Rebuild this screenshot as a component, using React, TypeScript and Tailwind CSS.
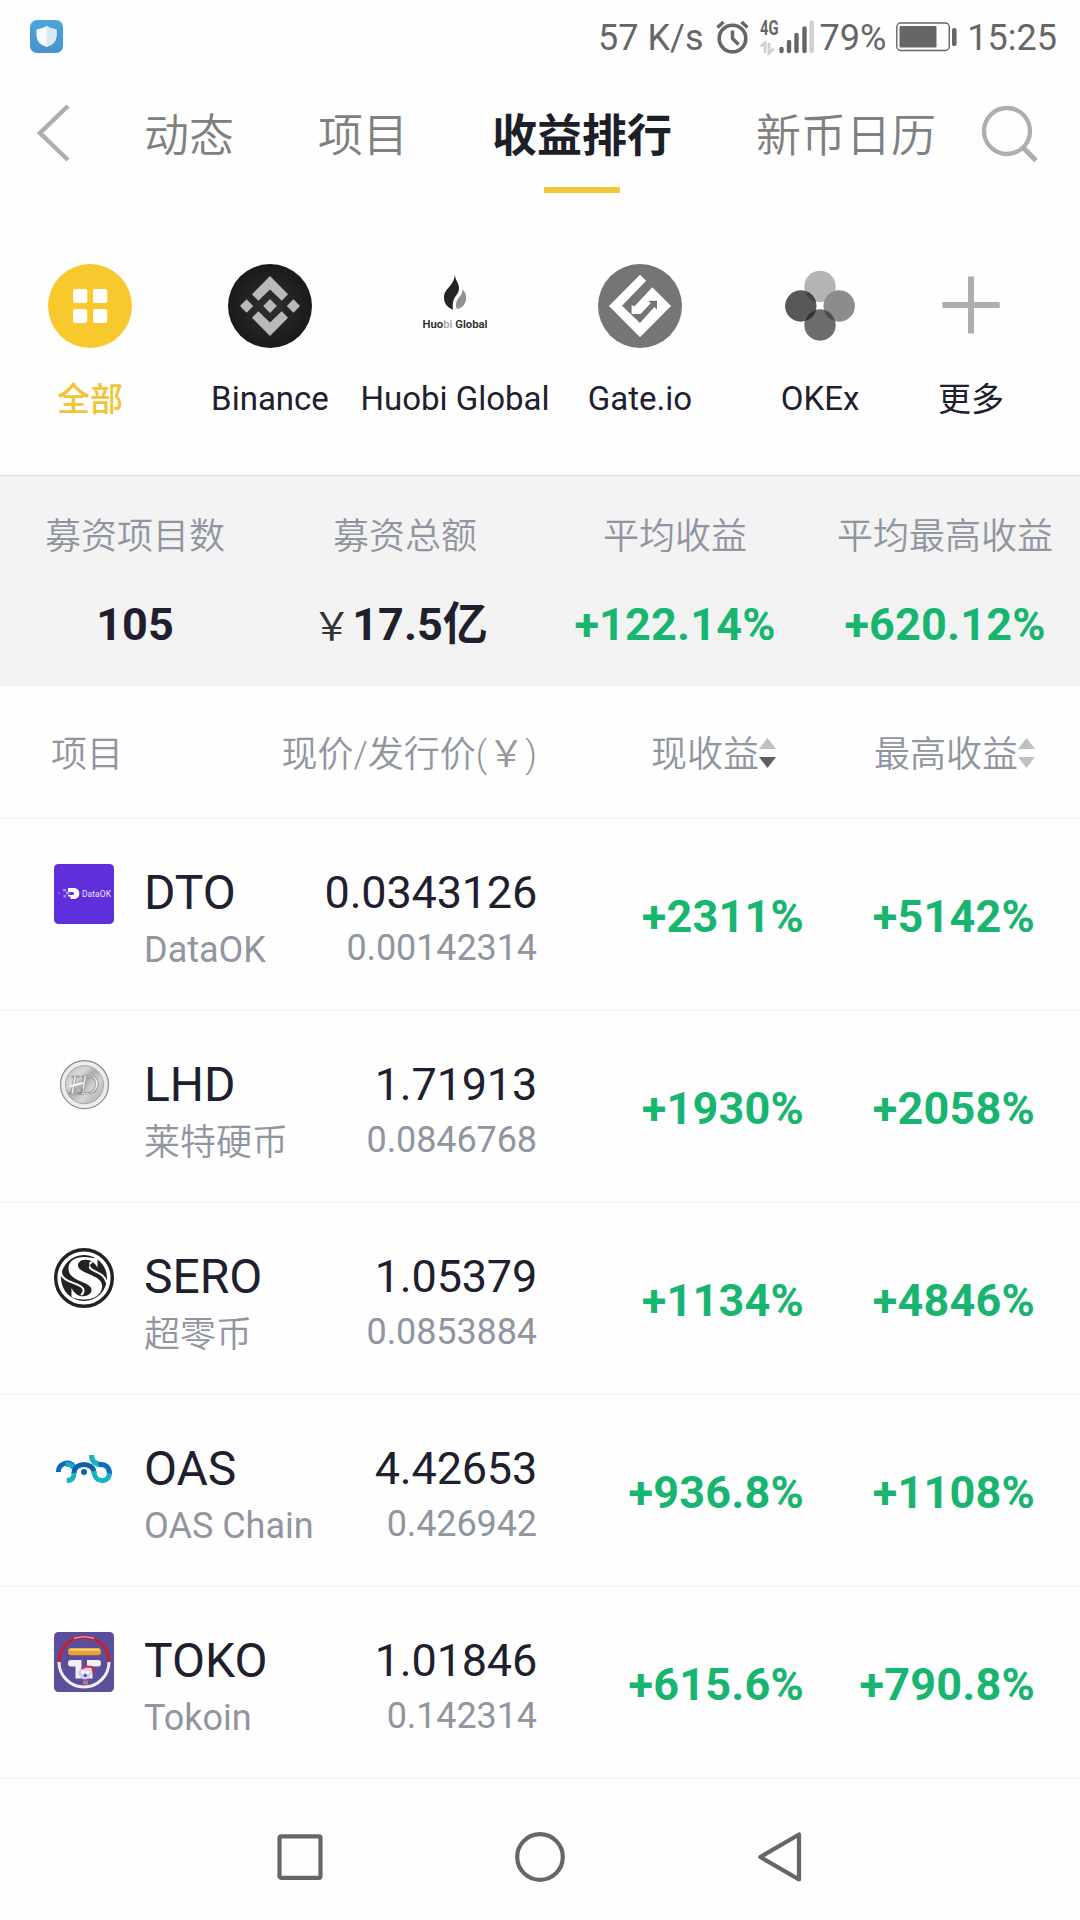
import type { ReactNode } from "react";

type Exchange = {
  id: string;
  label: string;
  width: string;
  icon: ReactNode;
  active?: boolean;
};

type ProjectRow = {
  symbol: string;
  name: string;
  price: string;
  issuePrice: string;
  current: string;
  highest: string;
  logo: ReactNode;
};

// full-width yen sign, always taken from the CJK face
const YEN = "\uFFE5";

const isCjk = (s: string) => /[\u4e00-\u9fff]/.test(s);

function AllIcon() {
  return (
    <svg viewBox="0 0 84 84" className="size-[84px]">
      <circle cx="42" cy="42" r="42" fill="#f8c92d" />
      <g fill="#fff">
        <rect x="25" y="25" width="14.3" height="14" rx="2.5" />
        <rect x="45" y="25" width="14.3" height="14" rx="2.5" />
        <rect x="25" y="45" width="14.3" height="14" rx="2.5" />
        <rect x="45" y="45" width="14.3" height="14" rx="2.5" />
      </g>
    </svg>
  );
}

function BinanceIcon() {
  return (
    <svg viewBox="0 0 84 84" className="size-[84px]">
      <defs>
        <radialGradient id="bnBg">
          <stop offset="0" stopColor="#303030" />
          <stop offset="1" stopColor="#1a1a1a" />
        </radialGradient>
      </defs>
      <circle cx="42" cy="42" r="42" fill="url(#bnBg)" />
      <g fill="#b9b9b9">
        <path d="M42 12 60 30.3 53.7 36.8 42 25.5 30.3 36.8 24 30.3Z" />
        <path d="M42 72 60 53.7 53.7 47.2 42 58.5 30.3 47.2 24 53.7Z" />
        <path d="M42 35 48.8 42 42 49 35.2 42Z" />
        <path d="M18.6 35.3 25.2 42 18.6 48.7 12 42Z" />
        <path d="M65.4 35.3 72 42 65.4 48.7 58.8 42Z" />
      </g>
    </svg>
  );
}

function HuobiIcon() {
  return (
    <svg viewBox="0 0 84 84" className="size-[84px]">
      <path
        d="M41.8 11C43 18 48 21.500 45.300 28C43.500 32.500 38.500 34.500 40 45.700C33 43 30.500 37.500 31 32C31.800 24 41 22 41.800 11Z"
        fill="#242424"
      />
      <path
        d="M49.600 25.300C52.500 28.500 54 33 52.800 37C51.500 41.500 48 44.500 44 45C42 41 43 36.500 46 33.500C48.500 31 49.500 28.500 49.600 25.300Z"
        fill="#929292"
      />
      <text
        x="9.500"
        y="63.500"
        textLength="65"
        lengthAdjust="spacingAndGlyphs"
        fontSize="11.5"
        fontWeight="600"
        fontFamily="Roboto, sans-serif"
        fill="#2b2b2b"
      >
        Huo<tspan fill="#a8a8a8">bi</tspan> Global
      </text>
    </svg>
  );
}

function GateIcon() {
  return (
    <svg viewBox="0 0 84 84" className="size-[84px]">
      <circle cx="42" cy="42" r="42" fill="#757575" />
      <path
        d="M42 10.700 48.200 16.700 24 41.800 42 59 56.300 43 59 45.500V36.700H50.300L52.700 39.200 42.500 50H33.600V41.300L36.500 42.300 54.300 23.300 73 42 42 73.300 11 42Z"
        fill="#fff"
      />
    </svg>
  );
}

function OkexIcon() {
  return (
    <svg viewBox="0 0 84 84" className="size-[84px]">
      <circle cx="42" cy="22.500" r="15.700" fill="#b4b4b4" />
      <circle cx="61.200" cy="42" r="15.700" fill="#8c8c8c" />
      <circle cx="42" cy="61" r="15.700" fill="#6c6c6c" />
      <circle cx="22.800" cy="42" r="15.700" fill="#585858" />
      {/* petal overlaps */}
      <path d="M27.200 27A15.700 15.700 0 0 1 38 38A15.700 15.700 0 0 1 27.200 27Z" fill="#444" />
      <path d="M56.800 27A15.700 15.700 0 0 1 46 38A15.700 15.700 0 0 0 56.800 27Z" fill="#757575" />
      <path d="M27.200 57A15.700 15.700 0 0 1 38 46A15.700 15.700 0 0 1 27.200 57Z" fill="#333" />
      <path d="M56.800 57A15.700 15.700 0 0 0 46 46A15.700 15.700 0 0 0 56.800 57Z" fill="#4c4c4c" />
      <rect x="39" y="39" width="6" height="6" fill="#fff" />
    </svg>
  );
}

function MoreIcon() {
  return (
    <svg viewBox="0 0 84 84" className="size-[84px]">
      <path d="M13.500 41H70.700M42 12.500V69.500" stroke="#aeaeae" strokeWidth="6" />
    </svg>
  );
}

function DataOkLogo() {
  return (
    <svg viewBox="0 0 60 60" className="size-[60px]">
      <rect width="60" height="60" rx="4.500" fill="#5f2fdb" />
      <path d="M14 24H19.500C23.500 24 25.300 26.500 25.300 29.500S23.500 35 19.500 35H16.500V32.500H14V31H18.500C20.500 31 20.500 28 18.500 28H14Z" fill="#fff" />
      <g fill="#a98cf0">
        <rect x="9" y="25" width="3" height="2.500" />
        <rect x="12" y="27.500" width="3.500" height="3" />
        <rect x="9.500" y="31" width="2.500" height="2.500" />
        <rect x="4" y="28" width="2" height="2" opacity=".5" />
      </g>
      <text
        x="28"
        y="32.800"
        textLength="29"
        fontSize="8.500"
        fontFamily="Roboto, sans-serif"
        fill="#ede6ff"
      >
        DataOK
      </text>
    </svg>
  );
}

function LhdLogo() {
  return (
    <svg viewBox="0 0 60 60" className="size-[60px]">
      <defs>
        <linearGradient id="coin" x1="0" y1="0" x2="1" y2="1">
          <stop offset="0" stopColor="#b5b5b5" />
          <stop offset=".3" stopColor="#d9d9d9" />
          <stop offset=".45" stopColor="#adadad" />
          <stop offset=".65" stopColor="#d4d4d4" />
          <stop offset="1" stopColor="#a4a4a4" />
        </linearGradient>
      </defs>
      <circle cx="30.500" cy="28.700" r="24" fill="#ececec" stroke="#8b8b8b" strokeWidth="1.200" />
      <circle cx="30.500" cy="28.700" r="19" fill="url(#coin)" stroke="#a5a5a5" />
      <text
        x="15"
        y="38"
        letterSpacing="-5"
        fontSize="27"
        fontStyle="italic"
        fontFamily="Liberation Serif, serif"
        fill="#f7f7f7"
        stroke="#7c7c7c"
        strokeWidth=".7"
      >
        LD
      </text>
      <path d="M15.500 30.500 29 27" stroke="#f7f7f7" strokeWidth="2" />
    </svg>
  );
}

function SeroLogo() {
  return (
    <svg viewBox="0 0 60 60" className="size-[60px]">
      <circle cx="30" cy="30" r="28.300" fill="#fff" stroke="#222" strokeWidth="3.400" />
      <circle cx="30" cy="30" r="23" fill="#222" />
      <path
        d="M43.500 9V19.500C41 15 37 11.500 31 11.800C26.500 12 24 14.500 24 17.500C24 21.500 29 23.500 36 26.500C44 30 49 33 48 40C47 47 39 51.500 31 51.500C25 51.500 19 50.500 17.500 48.500V40C20 45 24 48.500 29.500 48.300C34 48 37.500 45.500 37.500 42C37.500 38 33 36 27 33.500C18 29.500 14 26 14.500 19.500C15 12 23 8.500 31 9C36 9.300 40 11 43.500 9Z"
        fill="#fff"
      />
      <path
        d="M6.500 24C9 34 20 34 27 38.500C31 41 30 45 27 47M53 35C50 24 41 25 36.500 20.500C33.500 17.500 36 14 38.500 14"
        fill="none"
        stroke="#fff"
        strokeWidth="2"
      />
      <circle cx="30.500" cy="17" r="5" fill="#222" />
    </svg>
  );
}

function OasLogo() {
  return (
    <svg viewBox="0 0 60 60" className="size-[60px]">
      <g fill="none" strokeWidth="5">
        <path d="M4.300 32C4.300 23.500 14 20.500 19.500 26" stroke="#0d67b3" />
        <path d="M11.500 24.500Q16.500 23.500 20 28" stroke="#18a9c6" />
        <path d="M12.700 40.500C20 40.500 20 36 20 32" stroke="#18b3c4" />
        <path d="M49 24.800C43 24.800 37.500 23 37.500 15" stroke="#18b3c4" />
        <path d="M20 33C20 21.500 40 21.500 40 33" stroke="#0e62ae" />
        <path d="M40 31C40 43.500 55.500 43.500 55.500 33" stroke="#18b3c4" />
        <path d="M44.500 24.600C51 23.500 55.500 27 55.500 33.500" stroke="#0e70b8" />
      </g>
      <circle cx="30" cy="32" r="3" fill="#0e62ae" />
    </svg>
  );
}

function TokoLogo() {
  return (
    <svg viewBox="0 0 60 60" className="size-[60px]">
      <rect width="60" height="60" rx="4.500" fill="#5c4e9b" />
      <g fill="none" strokeWidth="3">
        <path d="M5 30A25 25 0 0 1 55 30" stroke="#c3202e" />
        <path d="M5 30A25 25 0 0 0 55 30" stroke="#f1eff8" />
        <path d="M20 6.500Q30 3 40 6.500" stroke="#f0c4c6" strokeWidth="1.200" />
      </g>
      <rect x="14" y="16" width="33" height="7.200" rx="3.200" fill="#e6a331" />
      <rect x="15.500" y="16.800" width="30" height="2" rx="1" fill="#f5cf7c" />
      <path
        d="M17 28H27.500V46.500H21.500V34.500H17Q14 34.500 14 31.300T17 28Z"
        fill="#f3f1fa"
      />
      <path d="M33 28H44Q47 28 47 31.300T44 34.500H38.500V46.500H33Z" fill="#f3f1fa" />
      <circle cx="31" cy="41" r="6.500" fill="#d9c8f2" />
      <path d="M27.500 36.500 32 34.500 38 35 39.500 41.500" fill="none" stroke="#cf3345" strokeWidth="2" />
      <circle cx="29" cy="40" r="1.800" fill="#fff" />
      <circle cx="33.500" cy="40" r="1.800" fill="#fff" />
      <circle cx="31.300" cy="43.500" r="1.600" fill="#4848b8" />
      <path d="M29 48.500H34V52.500H29Z" fill="#b87587" />
    </svg>
  );
}

const EXCHANGES: Exchange[] = [
  { id: "all", label: "全部", width: "w-[180px]", icon: <AllIcon />, active: true },
  { id: "binance", label: "Binance", width: "w-[180px]", icon: <BinanceIcon /> },
  { id: "huobi", label: "Huobi Global", width: "w-[190px]", icon: <HuobiIcon /> },
  { id: "gate", label: "Gate.io", width: "w-[180px]", icon: <GateIcon /> },
  { id: "okex", label: "OKEx", width: "w-[180px]", icon: <OkexIcon /> },
  { id: "more", label: "更多", width: "w-[122px]", icon: <MoreIcon /> }
];

const ROWS: ProjectRow[] = [
  {
    symbol: "DTO",
    name: "DataOK",
    price: "0.0343126",
    issuePrice: "0.00142314",
    current: "+2311%",
    highest: "+5142%",
    logo: <DataOkLogo />
  },
  {
    symbol: "LHD",
    name: "莱特硬币",
    price: "1.71913",
    issuePrice: "0.0846768",
    current: "+1930%",
    highest: "+2058%",
    logo: <LhdLogo />
  },
  {
    symbol: "SERO",
    name: "超零币",
    price: "1.05379",
    issuePrice: "0.0853884",
    current: "+1134%",
    highest: "+4846%",
    logo: <SeroLogo />
  },
  {
    symbol: "OAS",
    name: "OAS Chain",
    price: "4.42653",
    issuePrice: "0.426942",
    current: "+936.8%",
    highest: "+1108%",
    logo: <OasLogo />
  },
  {
    symbol: "TOKO",
    name: "Tokoin",
    price: "1.01846",
    issuePrice: "0.142314",
    current: "+615.6%",
    highest: "+790.8%",
    logo: <TokoLogo />
  }
];

const TABS = ["动态", "项目", "收益排行", "新币日历"];
const ACTIVE_TAB = "收益排行";

function StatusBar() {
  return (
    <div className="flex h-[75px] items-center pr-[23px] pl-[30px] text-[36px] leading-none text-[#666]">
      <svg viewBox="0 0 33 33" className="-mt-[2px] size-[33px]">
        <defs>
          <linearGradient id="guard" x1="0" y1="0" x2="0" y2="1">
            <stop offset="0" stopColor="#4aa6dc" />
            <stop offset="1" stopColor="#4791d0" />
          </linearGradient>
        </defs>
        <rect width="33" height="33" rx="7" fill="url(#guard)" />
        <path d="M16.500 6Q21 9 26.500 9.500V16Q26 24 16.500 27Q7 24 6.500 16V9.500Q12 9 16.500 6Z" fill="#f6fbfe" />
        <path d="M16.500 6Q21 9 26.500 9.500V16Q26 24 16.500 27Z" fill="#d9eaf5" />
      </svg>
      <span className="ml-auto">57 K/s</span>
      <svg viewBox="0 0 33 34" className="-mt-[2px] ml-[12px] h-[34px] w-[33px]" fill="none" stroke="#666">
        <circle cx="16.500" cy="18.500" r="13.300" strokeWidth="3.600" />
        <path d="M16.500 10.500V18.500L22.500 24.500" strokeWidth="3.400" />
        <path d="M1.500 7.500 7.500 2M31.500 7.500 25.500 2" strokeWidth="3.400" />
      </svg>
      <div className="-mt-[2px] ml-[11px] flex">
        <svg viewBox="0 0 19 36" className="h-[36px] w-[19px] overflow-visible">
          <text
            x="0"
            y="16"
            textLength="18.500"
            lengthAdjust="spacingAndGlyphs"
            fontSize="20"
            fontWeight="700"
            fontFamily="Roboto, sans-serif"
            fill="#666"
          >
            4G
          </text>
          <path
            d="M.5 27.500 5 24V34M9 24V34L14 29.500"
            fill="none"
            stroke="#d0d0d0"
            strokeWidth="2.800"
          />
        </svg>
        <svg viewBox="19 0 35 36" className="h-[36px] w-[35px]">
          <g strokeWidth="4.400" strokeLinecap="round" stroke="#666">
            <path d="M21.500 30V32M29 23V32M36.500 16V32M44.500 9.500V32" />
            <path d="M51.700 3.500V32" stroke="#d0d0d0" />
          </g>
        </svg>
      </div>
      <span className="ml-[6px]">79%</span>
      <svg viewBox="0 0 61 30" className="-mt-[2px] ml-[10px] h-[30px] w-[61px]">
        <rect x=".8" y="1" width="52.500" height="27.500" rx="4" fill="none" stroke="#666" strokeWidth="1.400" />
        <rect x="3.500" y="4" width="37" height="21.500" rx="1" fill="#666" />
        <rect x="56" y="6" width="4.600" height="18" rx="2" fill="#666" />
      </svg>
      <span className="ml-[10px]">15:25</span>
    </div>
  );
}

function TopNav() {
  return (
    <div className="flex h-[118px] items-center pr-[42px] pl-[36px]">
      <svg
        viewBox="0 0 34 58"
        className="-mt-[2px] h-[58px] w-[34px]"
        fill="none"
        stroke="#aeaeae"
        strokeWidth="4.500"
      >
        <path d="M32 2 4 29 32 56" />
      </svg>
      <nav className="ml-[74px] flex h-full gap-[84px] text-[45px]">
        {TABS.map((tab) => {
          const active = tab === ACTIVE_TAB;
          return (
            <div
              key={tab}
              className={`relative flex items-center pt-[6px] whitespace-nowrap ${
                active ? "font-bold text-[#1c1e28]" : "font-[350] text-[#808080]"
              }`}
            >
              {tab}
              {active && (
                <span className="absolute bottom-0 left-1/2 h-[6px] w-[76px] -translate-x-1/2 bg-[#f0c93b]" />
              )}
            </div>
          );
        })}
      </nav>
      <svg
        viewBox="0 0 57 58"
        className="-mt-[2px] ml-auto h-[58px] w-[57px]"
        fill="none"
        stroke="#aeaeae"
        strokeWidth="4.300"
      >
        <circle cx="26" cy="27" r="23" />
        <path d="M42 43.500 55 56.500" strokeWidth="5" />
      </svg>
    </div>
  );
}

function ExchangeBar() {
  return (
    <div className="flex h-[282px] pt-[71px]">
      {EXCHANGES.map((ex) => (
        <div key={ex.id} className={`flex shrink-0 flex-col items-center ${ex.width}`}>
          {ex.icon}
          <span
            className={`text-[33px] leading-[40px] whitespace-nowrap ${
              isCjk(ex.label) ? "mt-[32px]" : "mt-[31px]"
            } ${ex.active ? "font-medium text-[#efc437]" : "text-[#1f202e]"}`}
          >
            {ex.label}
          </span>
        </div>
      ))}
    </div>
  );
}

function Stat({ label, children, up }: { label: string; children: ReactNode; up?: boolean }) {
  return (
    <div className="flex flex-col items-center whitespace-nowrap">
      <span className="text-[36px] leading-[42px] font-[350] text-[#9095a0]">{label}</span>
      <span
        className={`mt-[40px] text-[45px] leading-[54px] font-bold ${
          up ? "tracking-[0.15px] text-[#17b56f]" : "text-[#1f1f2e]"
        }`}
      >
        {children}
      </span>
    </div>
  );
}

function Summary() {
  return (
    <div className="grid h-[211px] grid-cols-4 border-t border-[#dcdcdc] bg-[#f3f3f3] pt-[40px]">
      <Stat label="募资项目数">105</Stat>
      <Stat label="募资总额">
        <span className="mr-px text-[39px] font-normal text-[#333]">{YEN}</span>
        <span className="mr-[10px]">17.5亿</span>
      </Stat>
      <Stat label="平均收益" up>
        +122.14%
      </Stat>
      <Stat label="平均最高收益" up>
        +620.12%
      </Stat>
    </div>
  );
}

function SortArrows({ desc }: { desc?: boolean }) {
  return (
    <svg viewBox="0 0 17 30" className="-mt-[5px] h-[30px] w-[17px]">
      <path d="M0 11H17L8.500 0Z" fill="#c0c0c0" />
      <path d="M0 19H17L8.500 30Z" fill={desc ? "#5f5f5f" : "#c0c0c0"} />
    </svg>
  );
}

function TableHead() {
  return (
    <div className="grid h-[133px] grid-cols-[262px_224px_267px_231px] items-center border-b border-[#f0f0f0] pt-[6px] pl-[51px] text-[36px] leading-[42px] font-[350] whitespace-nowrap text-[#9095a0]">
      <span>项目</span>
      <span className="flex justify-end">
        现价/发行价(<span className="px-px font-normal text-[#999]">{YEN}</span>)
      </span>
      <span className="flex items-center justify-end pr-[28px]">
        现收益
        <SortArrows desc />
      </span>
      <span className="flex items-center justify-end">
        最高收益
        <SortArrows />
      </span>
    </div>
  );
}

function Row({ row }: { row: ProjectRow }) {
  return (
    <div className="grid h-[192px] grid-cols-[90px_169px_224px_267px_231px] border-b border-[#f0f0f0] pt-[45px] pl-[54px] whitespace-nowrap text-[#1f202e]">
      {row.logo}
      <div className="flex flex-col pt-px">
        <span className="text-[48px] leading-[56px]">{row.symbol}</span>
        <span
          className={`text-[36px] leading-[44px] text-[#9095a0] ${
            isCjk(row.name) ? "mt-[8px] font-[350]" : "mt-[7px]"
          }`}
        >
          {row.name}
        </span>
      </div>
      <div className="flex flex-col items-end pt-px">
        <span className="text-[45px] leading-[56px] tracking-[-0.2px]">{row.price}</span>
        <span className="mt-[5px] text-[36px] leading-[44px] tracking-[-0.1px] text-[#9095a0]">
          {row.issuePrice}
        </span>
      </div>
      <span className="mt-[25px] text-right text-[45px] leading-[56px] font-bold tracking-[0.2px] text-[#17b56f]">
        {row.current}
      </span>
      <span className="mt-[25px] text-right text-[45px] leading-[56px] font-bold tracking-[0.2px] text-[#17b56f]">
        {row.highest}
      </span>
    </div>
  );
}

function SystemNav() {
  return (
    <div className="flex flex-1 items-center pt-[15px] pl-[275px]">
      <svg viewBox="0 0 50 50" className="size-[50px]" fill="none" stroke="#666" strokeWidth="4.200">
        <rect x="4.500" y="4.300" width="41" height="41.500" rx="1.500" />
      </svg>
      <svg
        viewBox="0 0 50 50"
        className="ml-[190px] size-[50px]"
        fill="none"
        stroke="#666"
        strokeWidth="4.200"
      >
        <circle cx="25" cy="25" r="22.800" />
      </svg>
      <svg
        viewBox="0 0 44 50"
        className="ml-[193px] h-[50px] w-[44px]"
        fill="none"
        stroke="#666"
        strokeWidth="4.200"
        strokeLinejoin="round"
      >
        <path d="M41 2.500V47.500L2.300 25Z" />
      </svg>
    </div>
  );
}

export default function App() {
  return (
    <div className="flex h-[1920px] w-[1080px] flex-col overflow-hidden bg-[#fefefe] font-[Roboto,'Noto_Sans_CJK_SC',sans-serif]">
      <StatusBar />
      <TopNav />
      <ExchangeBar />
      <Summary />
      <TableHead />
      {ROWS.map((row) => (
        <Row key={row.symbol} row={row} />
      ))}
      <SystemNav />
    </div>
  );
}
